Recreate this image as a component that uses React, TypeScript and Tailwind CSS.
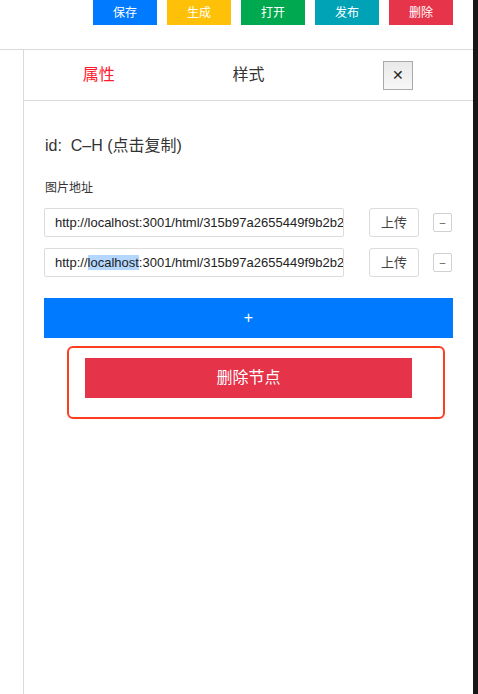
import { useState } from "react";

const FONT = {
  fontFamily: '"Liberation Sans", "Noto Sans CJK SC", sans-serif',
};

const URL = "http://localhost:3001/html/315b97a2655449f9b2b2c1d4e8a7f.png";

type TopBtn = { label: string; cls: string };

const topButtons: TopBtn[] = [
  { label: "保存", cls: "bg-[#007bff]" },
  { label: "生成", cls: "bg-[#ffc107]" },
  { label: "打开", cls: "bg-[#00a84f]" },
  { label: "发布", cls: "bg-[#00a3b6]" },
  { label: "删除", cls: "bg-[#e6344a]" },
];

function UrlRow({ highlight }: { highlight?: boolean }) {
  return (
    <div className="flex items-center">
      <div className="w-[300px] h-[29px] shrink-0 border border-[#dcdcdc] rounded-[2px] bg-white pl-[10px] flex items-center overflow-hidden whitespace-nowrap text-[13px] text-[#222]">
        <span className="block w-[288px] overflow-hidden">
          {highlight ? (
            <>
              http://<span className="bg-[#b3d7ff]">localhost</span>
              {URL.slice("http://localhost".length)}
            </>
          ) : (
            URL
          )}
        </span>
      </div>
      <button className="ml-[25px] w-[50px] h-[29px] shrink-0 border border-[#dcdcdc] rounded-[3px] bg-white text-[13px] text-[#444] flex items-center justify-center">
        上传
      </button>
      <button className="ml-[14px] w-[19px] h-[19px] shrink-0 border border-[#d0d0d0] rounded-[2px] bg-white text-[10px] text-[#555] flex items-center justify-center leading-none">
        –
      </button>
    </div>
  );
}

export default function App() {
  const [tab, setTab] = useState<"attr" | "style">("attr");

  return (
    <div className="w-full h-[694px] flex overflow-hidden" style={FONT}>
      <div className="flex-1 min-w-0 bg-white flex flex-col">
        {/* toolbar */}
        <div className="h-[50px] border-b border-[#d9d9d9] flex justify-end items-start gap-[10px] pr-[20px]">
          {topButtons.map((b) => (
            <button
              key={b.label}
              className={`w-[64px] h-[25px] text-white text-[12px] flex items-center justify-center ${b.cls}`}
            >
              {b.label}
            </button>
          ))}
        </div>

        <div className="flex-1 flex">
          <div className="w-[24px] shrink-0 border-r border-[#d9d9d9]" />

          <div className="flex-1 min-w-0 flex flex-col">
            {/* tabs */}
            <div className="h-[51px] border-b border-[#d9d9d9] flex items-center">
              <button
                onClick={() => setTab("attr")}
                className={`w-[150px] text-[16px] text-center ${tab === "attr" ? "text-[#ff1a2e]" : "text-[#333]"}`}
              >
                属性
              </button>
              <button
                onClick={() => setTab("style")}
                className={`w-[150px] text-[16px] text-center ${tab === "style" ? "text-[#ff1a2e]" : "text-[#333]"}`}
              >
                样式
              </button>
              <div className="w-[150px] flex justify-center">
                <button className="w-[30px] h-[29px] border border-[#aaa] bg-gradient-to-b from-[#e9e9e9] to-[#f7f7f7] text-[#222] text-[14px] flex items-center justify-center">
                  ✕
                </button>
              </div>
            </div>

            {/* content */}
            <div className="px-[20px] pt-[36px] flex flex-col">
              <div className="text-[16px] text-[#333] pl-[1px] leading-[18px]">
                id:&nbsp; C–H (点击复制)
              </div>
              <div className="mt-[26px] text-[12px] text-[#333] pl-[1px] leading-[14px]">
                图片地址
              </div>
              <div className="mt-[13px] flex flex-col gap-[11px]">
                <UrlRow />
                <UrlRow highlight />
              </div>
              <button className="mt-[21px] w-full h-[40px] bg-[#007bff] text-white text-[16px] flex items-center justify-center">
                +
              </button>
              <div className="mt-[8px] ml-[23px] w-[378px] h-[73px] border-2 border-[#ff3d1f] rounded-[6px] pt-[10px] pl-[16px]">
                <button className="w-[327px] h-[40px] bg-[#e5334a] text-white text-[16px] flex items-center justify-center">
                  删除节点
                </button>
              </div>
            </div>
          </div>
        </div>
      </div>
      {/* dark edge of the neighbouring window */}
      <div className="w-[5px] shrink-0 h-full bg-neutral-900" />
    </div>
  );
}
